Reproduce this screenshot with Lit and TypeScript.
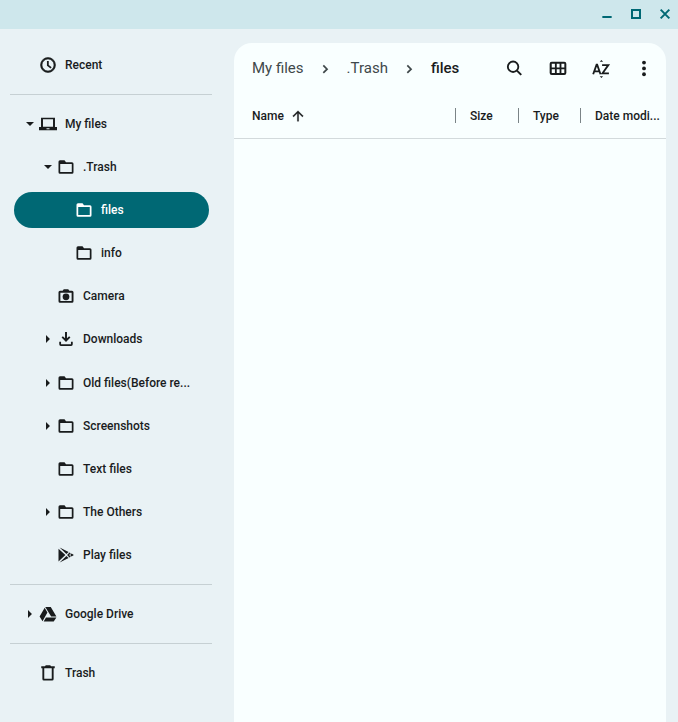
import { LitElement, html, css, svg, nothing } from "lit";
import { customElement, property, state } from "lit/decorators.js";
import { classMap } from "lit/directives/class-map.js";

const icons = {
  clock: svg`<path d="M12 2a10 10 0 1 0 0 20 10 10 0 0 0 0-20zm0 18a8 8 0 1 1 0-16 8 8 0 0 1 0 16z" stroke="currentColor" stroke-width=".8"/><path d="M13 6.500h-2.400V13l4.800 3.800 1.500-1.900L13 12z"/>`,
  laptop: svg`<path fill-rule="evenodd" d="M2.700 3.500h18.600V16H24v4.300H0V16h2.700zM5.300 5.800v10h13.400v-10zM10 17.800v1.200h4v-1.200z"/>`,
  folder: svg`<path fill-rule="evenodd" d="M4 3h6l2 2.500h8a2 2 0 0 1 2 2V19a2 2 0 0 1-2 2H4a2 2 0 0 1-2-2V5a2 2 0 0 1 2-2zm.3 5.100v10.600h15.400V8.100z"/>`,
  camera: svg`<path fill-rule="evenodd" d="M9 3h6l1.500 2H20a2 2 0 0 1 2 2v12a2 2 0 0 1-2 2H4a2 2 0 0 1-2-2V7a2 2 0 0 1 2-2h3.500zM4.500 7.500v11h15v-11z"/><circle cx="12" cy="13" r="4.500"/>`,
  download: svg`<path d="M10.700 2.500h2.600v8.600l2.900-2.900 1.700 1.700-5.900 6L6.100 9.900l1.700-1.700 2.900 2.900zM3 15.500h2.400v3.400h13.200v-3.400H21V19a2.300 2.300 0 0 1-2.400 2.300H5.400A2.300 2.300 0 0 1 3 19z"/>`,
  play: svg`<path d="M2 3.500v17L11.200 12zM3.500 2l9 8.700 3-2.700zM3.500 22l9-8.700 3 2.700zM16.600 8.700 13.500 12l3.100 3.300 1.800-1L16.200 12l2.200-2.300zM19.400 10 17.500 12l1.900 2L22.500 12z"/>`,
  drive: svg`<path d="M8.300 2.500h7.400L23.200 15.400h-7zM7.600 3.800 11.200 10.100 4.700 21.500.8 15.300zM9.300 16.600h13.900L19.600 22H6.200z"/>`,
  trash: svg`<path fill-rule="evenodd" d="M9 1.500h6l1 1.500h5v2.500h-1.500V20a2 2 0 0 1-2 2h-11a2 2 0 0 1-2-2V5.500H3V3h5zM7 5.500v14h10v-14z"/>`,
  search: svg`<circle cx="9.700" cy="10.500" r="6.300" fill="none" stroke="currentColor" stroke-width="2.200"/><path d="m14.300 15.100 5.200 5.200" stroke="currentColor" stroke-width="2.400"/>`,
  grid: svg`<path fill-rule="evenodd" d="M4.500 4.500h15A2.500 2.500 0 0 1 22 7v11a2.500 2.500 0 0 1-2.500 2.500h-15A2.500 2.500 0 0 1 2 18V7a2.500 2.500 0 0 1 2.500-2.500zm0 2.400v4.400h3.800V6.900zm6 0v4.400h3.400V6.900zm5.600 0v4.400h3.500V6.900zM4.500 13.500v4.600h3.800v-4.600zm6 0v4.600h3.400v-4.600zm5.600 0v4.600h3.500v-4.600z"/>`,
  sort: svg`<path d="M10.500 4.500 12.500 2.500l2 2zM10.500 22l2 2 2-2z"/><path fill="none" stroke="currentColor" stroke-width="2.200" d="M2.600 19.500 6.700 8h.7L11.400 19.500M4 16.100h6M13.300 8.500h7.500l-7 9.900h7.700"/>`,
  more: svg`<circle cx="12" cy="5.500" r="2.300"/><circle cx="12" cy="12.500" r="2.300"/><circle cx="12" cy="19.500" r="2.300"/>`,
  up: svg`<path d="M11 20V7.800l-5.600 5.600L4 12l8-8 8 8-1.400 1.400L13 7.800V20z" stroke="currentColor" stroke-width=".4"/>`,
  chevron: svg`<path fill="none" stroke="currentColor" stroke-width="2.700" d="m8.500 7 6 6-6 6"/>`,
  caretDown: svg`<path d="M6.700 9.300h10.600L12 14.600z"/>`,
  caretRight: svg`<path d="M9.300 6.700v10.600l5.300-5.300z"/>`,
  minimize: svg`<path d="M5 15h14v3H5z"/>`,
  maximize: svg`<path fill-rule="evenodd" d="M4.500 4.500h15v15h-15zm3 3v9h9v-9z"/>`,
  close: svg`<path fill="none" stroke="currentColor" stroke-width="3" d="m5.500 5.500 13 13M18.500 5.500l-13 13"/>`,
};

type IconName = keyof typeof icons;

@customElement("ui-icon")
class UiIcon extends LitElement {
  @property() name: IconName = "folder";

  static styles = css`
    :host { display: block; flex: none; width: 18px; height: 18px; }
    .glyph { display: block; width: 100%; height: 100%; fill: currentColor; }
  `;

  render() {
    return html`<svg class="glyph" viewBox="0 0 24 24" aria-hidden="true">${icons[this.name]}</svg>`;
  }
}

interface Entry {
  id: string;
  label: string;
  icon: IconName;
  level: number;
  open?: boolean;
}

const recent: Entry[] = [{ id: "recent", label: "Recent", icon: "clock", level: 0 }];
const myFiles: Entry[] = [
  { id: "my", label: "My files", icon: "laptop", level: 0, open: true },
  { id: "dot-trash", label: ".Trash", icon: "folder", level: 1, open: true },
  { id: "files", label: "files", icon: "folder", level: 2 },
  { id: "info", label: "info", icon: "folder", level: 2 },
  { id: "camera", label: "Camera", icon: "camera", level: 1 },
  { id: "downloads", label: "Downloads", icon: "download", level: 1, open: false },
  { id: "old", label: "Old files(Before re...", icon: "folder", level: 1, open: false },
  { id: "shots", label: "Screenshots", icon: "folder", level: 1, open: false },
  { id: "text", label: "Text files", icon: "folder", level: 1 },
  { id: "others", label: "The Others", icon: "folder", level: 1, open: false },
  { id: "play", label: "Play files", icon: "play", level: 1 },
];
const drive: Entry[] = [{ id: "drive", label: "Google Drive", icon: "drive", level: 0, open: false }];
const trash: Entry[] = [{ id: "trash", label: "Trash", icon: "trash", level: 0 }];

@customElement("app-root")
class AppRoot extends LitElement {
  @state() private selected = "files";

  static styles = css`
    :host {
      display: flex;
      flex-direction: column;
      min-height: 100vh;
      box-sizing: border-box;
      background: #e9f2f5;
      color: #191c1d;
      font: 500 12px/18px Roboto, sans-serif;
    }
    button {
      display: flex;
      align-items: center;
      justify-content: center;
      padding: 0;
      border: 0;
      background: none;
      color: inherit;
      font: inherit;
      cursor: pointer;
    }
    .titlebar {
      display: flex;
      justify-content: flex-end;
      gap: 11px;
      height: 28px;
      padding-right: 4px;
      border-bottom: 1px solid #cee7ec;
      background: #cee7ec;
      color: #006874;
    }
    .titlebar button { width: 18px; }
    .titlebar ui-icon { width: 16px; height: 16px; }
    .body { display: flex; flex: 1; }
    .sidebar { flex: none; width: 202px; padding: 18px 22px 18px 10px; }
    .group {
      display: flex;
      flex-direction: column;
      justify-content: space-between;
      margin: 0;
      padding: 0 3px 0 4px;
      list-style: none;
    }
    .group.tree { min-height: 467px; }
    .divider { height: 1px; margin: 11px 0; border: 0; background: #c6d0d3; }
    .row {
      width: 100%;
      height: 36px;
      justify-content: flex-start;
      border-radius: 18px;
      padding-left: 7px;
      white-space: nowrap;
    }
    .row.level1 { padding-left: 25px; }
    .row.level2 { padding-left: 43px; }
    .row.selected { background: #006874; color: #fff; }
    .caret { flex: none; width: 18px; height: 18px; }
    .label { margin-left: 8px; }
    .panel {
      flex: 1;
      min-width: 0;
      margin: 14px 12px 0 0;
      border-radius: 18px 18px 0 0;
      background: #f9ffff;
    }
    .toolbar {
      display: flex;
      align-items: center;
      justify-content: space-between;
      height: 50px;
      padding: 0 12px 0 18px;
    }
    .crumbs { display: flex; align-items: center; gap: 14px; font: 400 15px/20px Roboto, sans-serif; }
    .crumbs a { color: #3f484a; text-decoration: none; }
    .crumbs a.current { color: #191c1d; font-weight: 500; }
    .crumbs ui-icon { width: 15px; height: 15px; color: #3f484a; }
    .actions { display: flex; gap: 23px; }
    .actions button { width: 20px; height: 20px; }
    .actions ui-icon { width: 20px; height: 20px; }
    .files { width: 100%; table-layout: fixed; border-collapse: collapse; }
    .files th {
      height: 45px;
      padding: 0;
      border-bottom: 1px solid #d3dadc;
      font-weight: 500;
      text-align: left;
    }
    .cell { display: flex; align-items: center; height: 15px; white-space: nowrap; }
    .first { padding-left: 18px; }
    .first button { gap: 6px; }
    .first ui-icon { width: 16px; height: 16px; }
    .col-size { width: 63px; }
    .col-type { width: 62px; }
    .col-date { width: 86px; }
    .split { border-left: 1px solid #7b8487; padding-left: 14px; }
  `;

  private renderGroup(entries: Entry[], tree = false) {
    return html`<ul class=${classMap({ group: true, tree })}>
      ${entries.map(
        (e) => html`<li>
          <button
            class=${classMap({ row: true, [`level${e.level}`]: true, selected: e.id === this.selected })}
            aria-expanded=${e.open ?? nothing}
            aria-current=${e.id === this.selected ? "page" : nothing}
            @click=${() => (this.selected = e.id)}
          >
            <span class="caret">
              ${e.open === undefined ? nothing : html`<ui-icon name=${e.open ? "caretDown" : "caretRight"}></ui-icon>`}
            </span>
            <ui-icon name=${e.icon}></ui-icon>
            <span class="label">${e.label}</span>
          </button>
        </li>`,
      )}
    </ul>`;
  }

  render() {
    return html`
      <header class="titlebar">
        <button aria-label="Minimize"><ui-icon name="minimize"></ui-icon></button>
        <button aria-label="Maximize"><ui-icon name="maximize"></ui-icon></button>
        <button aria-label="Close"><ui-icon name="close"></ui-icon></button>
      </header>
      <div class="body">
        <nav class="sidebar" aria-label="Locations">
          ${this.renderGroup(recent)}
          <hr class="divider" />
          ${this.renderGroup(myFiles, true)}
          <hr class="divider" />
          ${this.renderGroup(drive)}
          <hr class="divider" />
          ${this.renderGroup(trash)}
        </nav>
        <main class="panel">
          <div class="toolbar">
            <nav class="crumbs" aria-label="Path">
              <a href="#my">My files</a>
              <ui-icon name="chevron"></ui-icon>
              <a href="#trash">.Trash</a>
              <ui-icon name="chevron"></ui-icon>
              <a class="current" href="#files" aria-current="page">files</a>
            </nav>
            <div class="actions">
              <button aria-label="Search"><ui-icon name="search"></ui-icon></button>
              <button aria-label="Switch to thumbnail view"><ui-icon name="grid"></ui-icon></button>
              <button aria-label="Sort options"><ui-icon name="sort"></ui-icon></button>
              <button aria-label="More options"><ui-icon name="more"></ui-icon></button>
            </div>
          </div>
          <table class="files">
            <thead>
              <tr>
                <th aria-sort="ascending">
                  <div class="cell first"><button>Name <ui-icon name="up"></ui-icon></button></div>
                </th>
                <th class="col-size"><div class="cell split"><button>Size</button></div></th>
                <th class="col-type"><div class="cell split"><button>Type</button></div></th>
                <th class="col-date"><div class="cell split"><button>Date modi...</button></div></th>
              </tr>
            </thead>
          </table>
        </main>
      </div>
    `;
  }
}
